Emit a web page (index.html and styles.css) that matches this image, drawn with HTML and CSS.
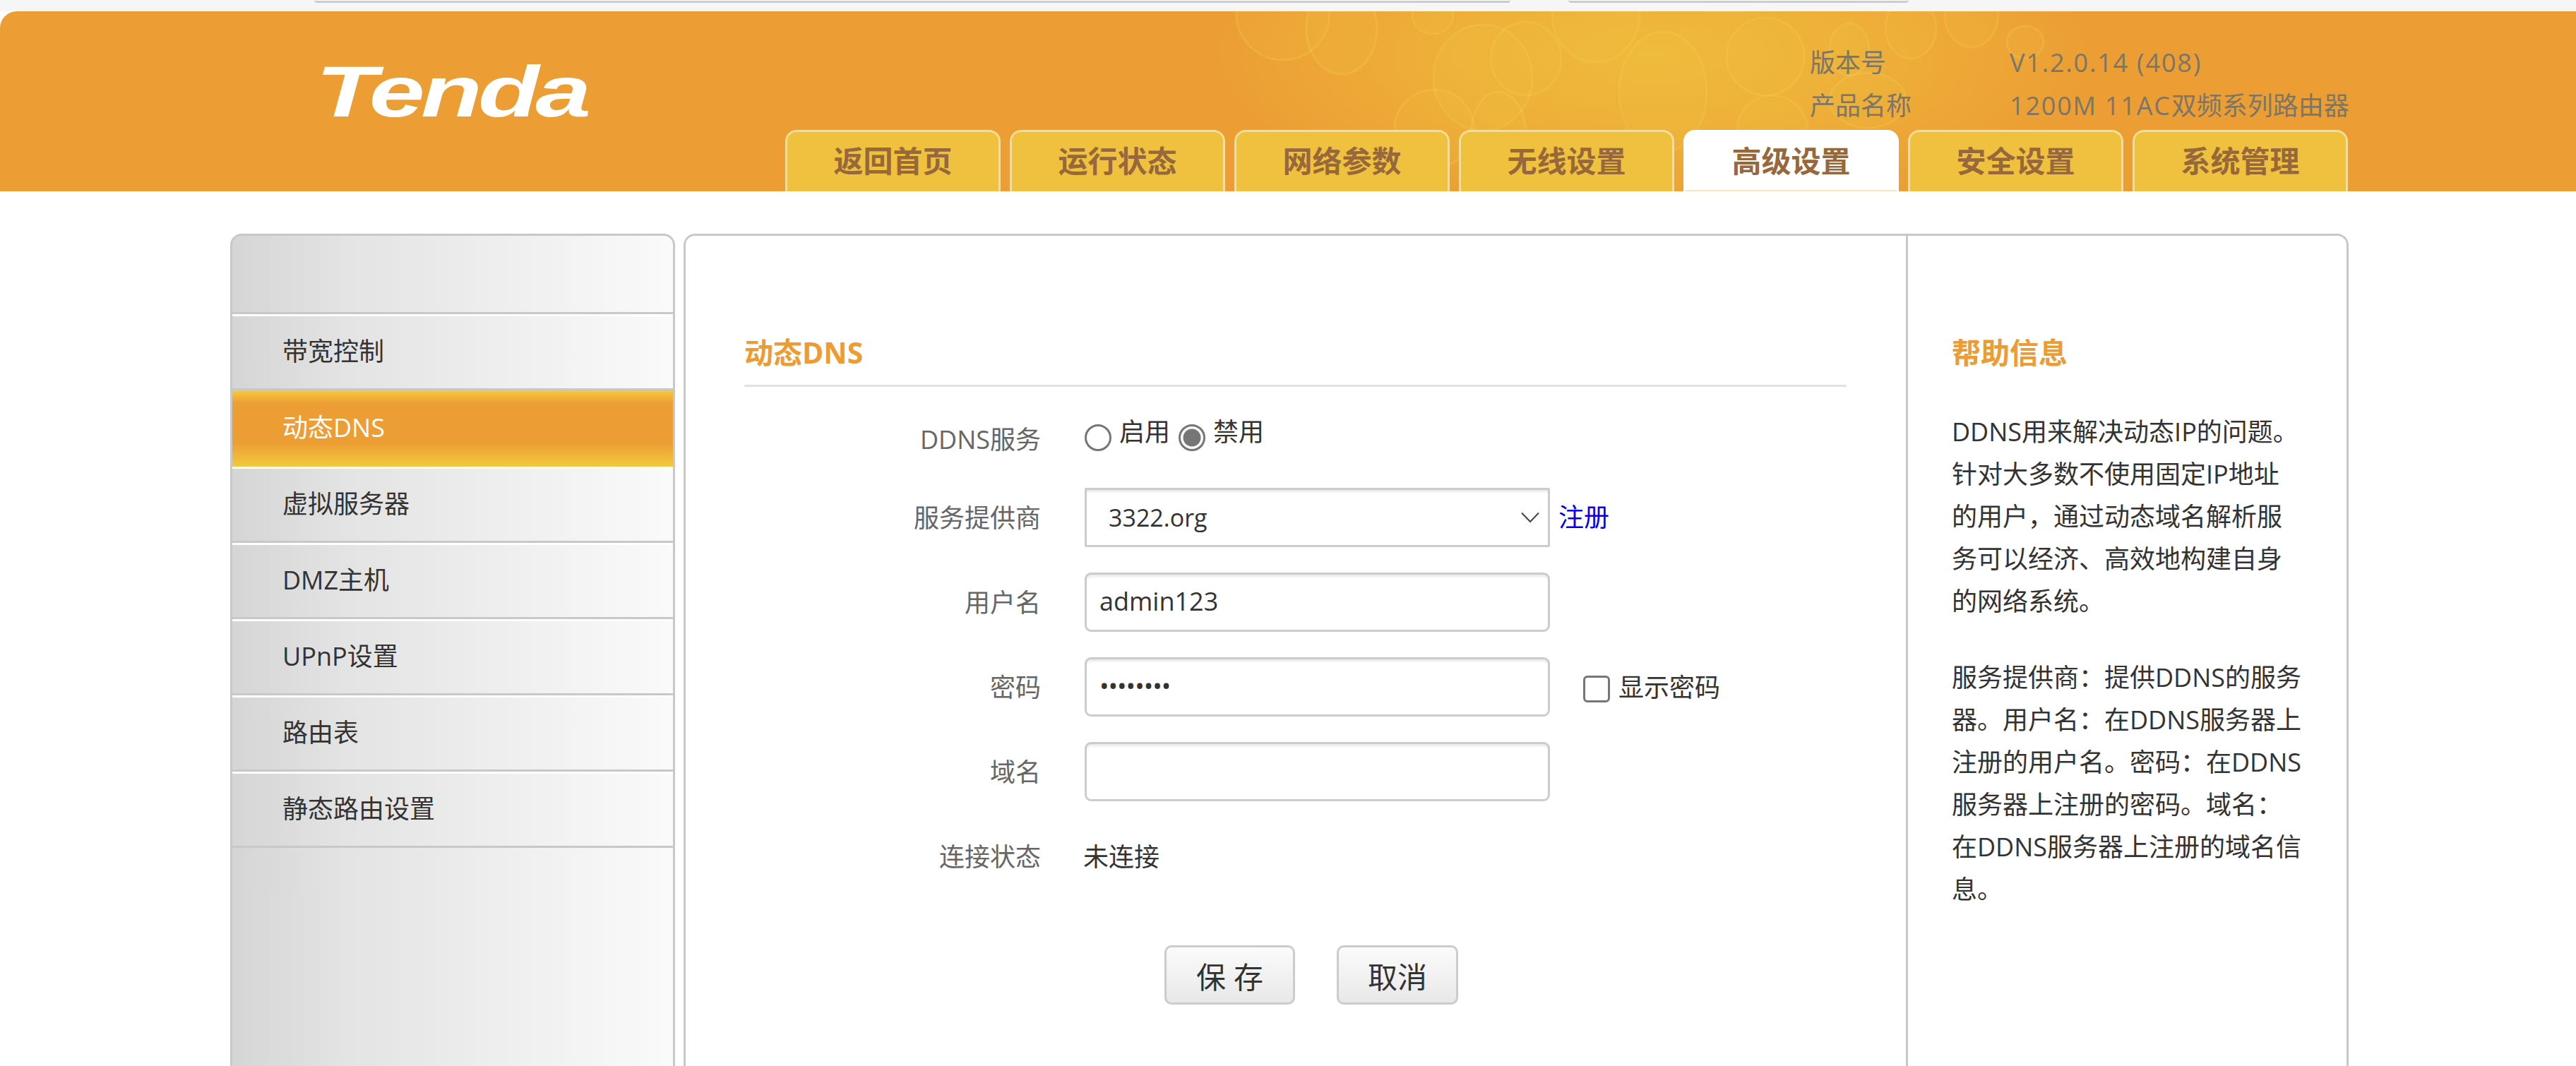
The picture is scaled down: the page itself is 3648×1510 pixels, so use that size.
FILE: index.html
```html
<!DOCTYPE html>
<html lang="zh-CN">
<head>
    <meta charset="UTF-8">
    <title>动态DNS</title>
    <link rel="stylesheet" href="styles.css">
</head>
<body>
    <div class="browser-strip">
        <span class="strip-bar strip-bar-long"></span>
        <span class="strip-bar strip-bar-short"></span>
    </div>

    <header class="header">
        <svg class="bubbles" width="3648" height="255" viewBox="0 16 3648 255" aria-hidden="true">
            <ellipse cx="1817" cy="20" rx="66" ry="65"/>
            <ellipse cx="1900" cy="40" rx="50" ry="65"/>
            <ellipse cx="2029" cy="22" rx="29" ry="26"/>
            <ellipse cx="2100" cy="110" rx="70" ry="75"/>
            <ellipse cx="2161" cy="83" rx="50" ry="52"/>
            <ellipse cx="2031" cy="182" rx="56" ry="55"/>
            <ellipse cx="2122" cy="190" rx="39" ry="60"/>
            <ellipse cx="2260" cy="20" rx="62" ry="68"/>
            <ellipse cx="2355" cy="130" rx="62" ry="85"/>
            <ellipse cx="2500" cy="80" rx="55" ry="55"/>
            <ellipse cx="2619" cy="70" rx="28" ry="37"/>
            <ellipse cx="2706" cy="40" rx="36" ry="43"/>
            <ellipse cx="2792" cy="20" rx="38" ry="47"/>
            <ellipse cx="2868" cy="60" rx="26" ry="23"/>
            <ellipse cx="2645" cy="142" rx="54" ry="39"/>
            <ellipse cx="2510" cy="185" rx="50" ry="50"/>
        </svg>
        <div class="logo"><span class="logo-text">Tenda</span></div>
        <div class="header-right">
            <dl class="device-info">
                <div class="info-row"><dt>版本号</dt><dd class="spaced">V1.2.0.14 (408)</dd></div>
                <div class="info-row"><dt>产品名称</dt><dd><span class="spaced">1200M 11AC</span>双频系列路由器</dd></div>
            </dl>
            <nav class="tabs">
                <a class="tab">返回首页</a>
                <a class="tab">运行状态</a>
                <a class="tab">网络参数</a>
                <a class="tab">无线设置</a>
                <a class="tab tab-active">高级设置</a>
                <a class="tab">安全设置</a>
                <a class="tab">系统管理</a>
            </nav>
        </div>
    </header>

    <div class="layout">
        <aside class="sidebar">
            <div class="sidebar-head"></div>
            <a class="side-item">带宽控制</a>
            <a class="side-item side-item-active">动态DNS</a>
            <a class="side-item">虚拟服务器</a>
            <a class="side-item">DMZ主机</a>
            <a class="side-item">UPnP设置</a>
            <a class="side-item">路由表</a>
            <a class="side-item">静态路由设置</a>
        </aside>

        <main class="panel">
            <section class="content">
                <h1 class="page-title">动态DNS</h1>
                <form class="form">
                    <div class="form-row form-row-radio">
                        <label class="form-label">DDNS服务</label>
                        <div class="radio-list">
                            <input type="radio" name="ddns" id="ddnsOn" class="radio">
                            <label for="ddnsOn" class="radio-text">启用</label>
                            <input type="radio" name="ddns" id="ddnsOff" class="radio" checked>
                            <label for="ddnsOff" class="radio-text">禁用</label>
                        </div>
                    </div>
                    <div class="form-row">
                        <label class="form-label">服务提供商</label>
                        <div class="select-box">
                            <span>3322.org</span>
                            <svg class="chevron" width="26" height="16" viewBox="0 0 26 16"><path d="M1 1.5 L13 14 L25 1.5" fill="none" stroke="#444" stroke-width="2"/></svg>
                        </div>
                        <a class="register-link">注册</a>
                    </div>
                    <div class="form-row">
                        <label class="form-label">用户名</label>
                        <input type="text" class="text-input" value="admin123">
                    </div>
                    <div class="form-row">
                        <label class="form-label">密码</label>
                        <input type="password" class="text-input pwd-input" value="admin123">
                        <div class="show-password">
                            <input type="checkbox" id="showPwd" class="checkbox">
                            <label for="showPwd">显示密码</label>
                        </div>
                    </div>
                    <div class="form-row">
                        <label class="form-label">域名</label>
                        <input type="text" class="text-input">
                    </div>
                    <div class="form-row">
                        <label class="form-label">连接状态</label>
                        <span class="status-text">未连接</span>
                    </div>
                    <div class="form-actions">
                        <button type="button" class="btn btn-save">保 存</button>
                        <button type="button" class="btn btn-cancel">取消</button>
                    </div>
                </form>
            </section>

            <section class="help">
                <h2 class="help-title">帮助信息</h2>
                <p class="help-text">DDNS用来解决动态IP的问题。<br>针对大多数不使用固定IP地址<br>的用户，通过动态域名解析服<br>务可以经济、高效地构建自身<br>的网络系统。</p>
                <p class="help-text">服务提供商：提供DDNS的服务<br>器。用户名：在DDNS服务器上<br>注册的用户名。密码：在DDNS<br>服务器上注册的密码。域名：<br>在DDNS服务器上注册的域名信<br>息。</p>
            </section>
        </main>
    </div>
</body>
</html>
```

FILE: styles.css
```css
* {
    margin: 0;
    padding: 0;
    box-sizing: border-box;
}

body {
    background: #fff;
    color: #333;
    font-family: "Open Sans", "Noto Sans CJK SC", sans-serif;
    font-size: 36px;
    width: 3648px;
    height: 1510px;
    overflow: hidden;
}

/* strip of the browser chrome left at the top of the shot */
.browser-strip {
    height: 16px;
    background: #f6f6f6;
    display: flex;
}

.strip-bar {
    display: block;
    height: 4px;
    background: #fff;
    border-bottom: 3px solid #ccc;
    border-radius: 0 0 10px 10px;
}

.strip-bar-long {
    width: 1694px;
    margin-left: 445px;
}

.strip-bar-short {
    width: 482px;
    margin-left: 82px;
}

/* header */
.header {
    position: relative;
    height: 255px;
    display: flex;
    overflow: hidden;
    border-radius: 24px 0 0 0;
    background:
        radial-gradient(ellipse 640px 240px at 2340px 60px, #efba3c 0%, #eeb039 45%, rgba(236, 157, 51, 0) 100%),
        #ec9d33;
}

.bubbles {
    position: absolute;
    left: 0;
    top: 0;
}

.bubbles ellipse {
    fill: rgba(244, 203, 66, 0.1);
    stroke: rgba(247, 214, 90, 0.22);
    stroke-width: 3;
}

.logo {
    position: relative;
    width: 1112px;
    padding: 63px 0 0 447px;
}

.logo-text {
    display: block;
    width: 280px;
    color: #fff;
    font-family: "Liberation Sans", sans-serif;
    font-size: 102px;
    font-weight: bold;
    font-style: italic;
    line-height: 102px;
    letter-spacing: -4px;
    transform: scaleX(1.39);
    transform-origin: left center;
}

.header-right {
    position: relative;
    display: flex;
    flex-direction: column;
    justify-content: flex-end;
}

.device-info {
    margin: 0 0 4px 1451px;
    color: #7b7668;
    line-height: 61px;
    white-space: nowrap;
}

.info-row {
    display: flex;
}

.info-row dt {
    width: 283px;
}

.spaced {
    letter-spacing: 1.8px;
}

.tabs {
    display: flex;
    gap: 13px;
}

.tab {
    width: 305px;
    height: 87px;
    background: #efc13f;
    border: 3px solid #f6dd97;
    border-bottom: 0;
    border-radius: 16px 16px 0 0;
    color: #96683c;
    font-size: 42px;
    font-weight: bold;
    line-height: 82px;
    text-align: center;
}

.tab-active {
    background: #fff;
    border-color: #fff;
    box-shadow: inset 0 -2px 0 #fbe3bb;
}

/* page body */
.layout {
    display: flex;
    gap: 12px;
    margin: 60px 0 0 326px;
    width: 3000px;
    height: 1179px;
}

.sidebar {
    width: 630px;
    border: 3px solid #c8c8c8;
    border-bottom: 0;
    border-radius: 16px 16px 0 0;
    background: linear-gradient(90deg, #d5d5d5 0%, #e3e3e3 25%, #fafafa 100%);
}

.sidebar-head {
    height: 111px;
    border-bottom: 3px solid #c8c8c8;
}

.side-item {
    display: block;
    height: 108px;
    padding-left: 71px;
    border-top: 3px solid #fff;
    border-bottom: 3px solid #c8c8c8;
    line-height: 100px;
    color: #333;
}

.side-item-active {
    border: 0;
    color: #fff;
    line-height: 106px;
    background: linear-gradient(180deg, #f5cb40 0%, #ec9d33 17%, #ec9d33 68%, #f3c93f 100%);
}

.panel {
    flex: 1;
    display: flex;
    border: 3px solid #c8c8c8;
    border-bottom: 0;
    border-radius: 16px 16px 0 0;
}

.content {
    width: 1731px;
    padding: 127px 0 0 83px;
    border-right: 3px solid #c8c8c8;
}

.page-title {
    width: 1561px;
    height: 87px;
    color: #ec9c33;
    font-size: 41px;
    font-weight: bold;
    line-height: 76px;
    border-bottom: 3px solid #e2e2e2;
}

.form {
    margin-top: 23px;
}

.form-row {
    display: flex;
    align-items: center;
    height: 84px;
    margin-bottom: 36px;
}

.form-label {
    width: 420px;
    margin-right: 62px;
    padding-bottom: 4px;
    text-align: right;
    color: #666;
}

.form-row-radio .form-label {
    margin-top: 18px;
}

.radio-list {
    display: flex;
    align-items: flex-start;
    height: 84px;
    padding-top: 16px;
}

.radio-text {
    line-height: 50px;
}

.radio {
    appearance: none;
    width: 38px;
    height: 38px;
    margin: 14px 11px 0 0;
    border: 3px solid #767676;
    border-radius: 50%;
    background: #fff;
}

.radio-text + .radio {
    margin-left: 11px;
}

.radio + .radio-text {
    margin-right: 1px;
}

.radio:checked {
    background: radial-gradient(circle, #767676 0, #767676 12px, #fff 13px);
}

.select-box {
    width: 659px;
    height: 84px;
    display: flex;
    align-items: center;
    justify-content: space-between;
    padding: 0 12px 0 31px;
    border: 3px solid #ccc;
    border-radius: 2px;
    box-shadow: inset 0 4px 4px -2px #e2e2e2;
    font-size: 34px;
}

.register-link {
    margin-left: 12px;
    padding-bottom: 6px;
    color: #0000ee;
}

.text-input {
    width: 659px;
    height: 84px;
    padding: 0 18px 3px;
    border: 3px solid #ccc;
    border-radius: 9px;
    box-shadow: inset 0 4px 4px -2px #e2e2e2;
    font-family: inherit;
    font-size: 36px;
    color: #333;
    outline: none;
}

.pwd-input {
    letter-spacing: -1px;
}

.show-password {
    display: flex;
    align-items: center;
    padding-bottom: 4px;
    margin-left: 47px;
}

.checkbox {
    appearance: none;
    width: 38px;
    height: 38px;
    margin: 10px 12px 0 0;
    border: 3px solid #767676;
    border-radius: 6px;
    background: #fff;
}

.status-text {
    padding-bottom: 4px;
    margin-left: -2px;
}

.form-actions {
    display: flex;
    gap: 59px;
    margin: 84px 0 0 595px;
}

.btn {
    height: 84px;
    border: 3px solid #ccc;
    border-radius: 10px;
    background: linear-gradient(180deg, #fbfbfb 0%, #e8e8e8 100%);
    font-family: inherit;
    font-size: 42px;
    color: #333;
}

.btn-save {
    width: 185px;
}

.btn-cancel {
    width: 172px;
}

.help {
    flex: 1;
    padding: 127px 0 0 62px;
}

.help-title {
    color: #ec9c33;
    font-size: 41px;
    font-weight: bold;
    line-height: 76px;
    margin-bottom: 45px;
}

.help-text {
    line-height: 60px;
    color: #333;
    white-space: nowrap;
    margin-bottom: 48px;
}
```
